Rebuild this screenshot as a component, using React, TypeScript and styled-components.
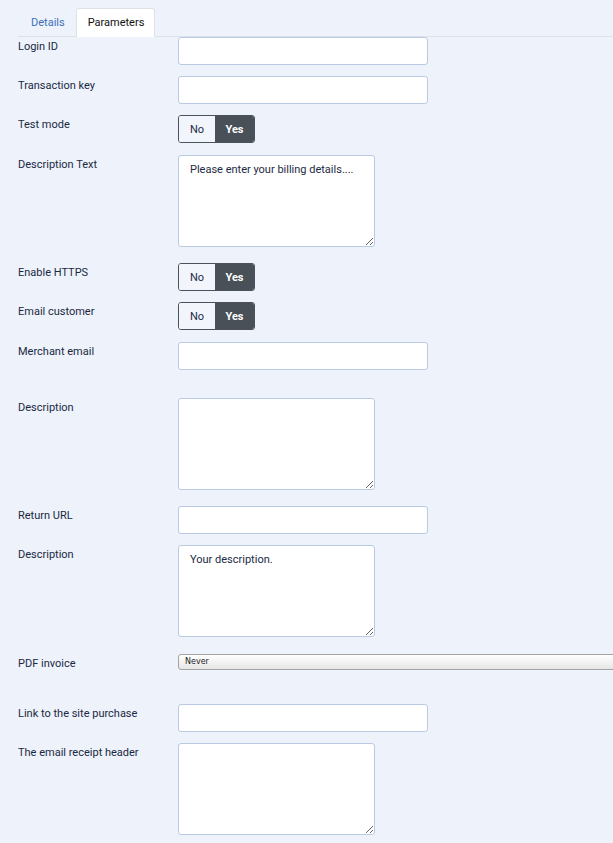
import React from "react";
import styled, { createGlobalStyle } from "styled-components";

const Global = createGlobalStyle`
  html, body { margin: 0; padding: 0; background: #eef3fb; }
  body { font-family: Roboto, "Liberation Sans", Arial, sans-serif; font-size: 11px; color: #1c2a44; }
  * { box-sizing: border-box; }
`;

const Page = styled.div`
  padding: 8px 0 0 18px;
  width: 613px;
  overflow: hidden;
`;

const TabBar = styled.div`
  display: flex;
  align-items: flex-end;
  border-bottom: 1px solid #dde2e8;
  height: 29px;
`;

const Tab = styled.div<{ $active?: boolean }>`
  height: 29px;
  padding: 0 10px 0 ${(p) => (p.$active ? 11 : 12)}px;
  display: flex;
  align-items: center;
  font-size: 11px;
  margin-bottom: -1px;
  color: ${(p) => (p.$active ? "#111" : "#3d6fb8")};
  background: ${(p) => (p.$active ? "#fff" : "transparent")};
  border: 1px solid ${(p) => (p.$active ? "#dde2e8" : "transparent")};
  border-bottom-color: ${(p) => (p.$active ? "#fff" : "transparent")};
  border-radius: 3px 3px 0 0;
`;

const Form = styled.div`
  display: flex;
  flex-direction: column;
`;

const Row = styled.div<{ $after?: number }>`
  display: flex;
  align-items: flex-start;
  margin-bottom: ${(p) => p.$after ?? 11}px;
`;

const Label = styled.label`
  width: 160px;
  flex: none;
  line-height: 20px;
  font-size: 11px;
  color: #1a2842;
`;

const Input = styled.input`
  width: 250px;
  height: 28px;
  border: 1px solid #b9cae2;
  border-radius: 3px;
  background: #fff;
  padding: 0 10px;
  font: inherit;
  outline: none;
  flex: none;
`;

const TextArea = styled.textarea`
  width: 197px;
  height: 92px;
  border: 1px solid #b9cae2;
  border-radius: 3px;
  background: #fff;
  padding: 6px 11px;
  font-family: Roboto, "Liberation Sans", Arial, sans-serif;
  font-size: 11px;
  color: #1c2a44;
  line-height: 16px;
  resize: vertical;
  outline: none;
  display: block;
  flex: none;
`;

const Toggle = styled.div`
  display: flex;
  height: 28px;
  border: 1px solid #4a525c;
  border-radius: 3px;
  overflow: hidden;
  flex: none;
`;

const ToggleBtn = styled.div<{ $on?: boolean }>`
  width: ${(p) => (p.$on ? 39 : 36)}px;
  display: flex;
  align-items: center;
  justify-content: center;
  font-size: 11px;
  font-weight: ${(p) => (p.$on ? 700 : 400)};
  color: ${(p) => (p.$on ? "#fff" : "#1c2a44")};
  background: ${(p) => (p.$on ? "#495058" : "#f2f6fc")};
`;

const Select = styled.div`
  width: 460px;
  height: 16px;
  border: 1px solid #a3a3a3;
  border-radius: 3px;
  background: linear-gradient(#ffffff, #e6e6e6);
  font-family: Tahoma, "DejaVu Sans", sans-serif;
  font-size: 8px;
  color: #222;
  line-height: 14px;
  padding-left: 6px;
  flex: none;
`;

const YesNo = () => (
  <Toggle>
    <ToggleBtn>No</ToggleBtn>
    <ToggleBtn $on>Yes</ToggleBtn>
  </Toggle>
);

export default function App() {
  return (
    <Page>
      <Global />
      <TabBar>
        <Tab>Details</Tab>
        <Tab $active>Parameters</Tab>
      </TabBar>
      <Form>
        <Row>
          <Label>Login ID</Label>
          <Input />
        </Row>
        <Row>
          <Label>Transaction key</Label>
          <Input />
        </Row>
        <Row $after={12}>
          <Label>Test mode</Label>
          <YesNo />
        </Row>
        <Row $after={16}>
          <Label>Description Text</Label>
          <TextArea defaultValue="Please enter your billing details...." />
        </Row>
        <Row>
          <Label>Enable HTTPS</Label>
          <YesNo />
        </Row>
        <Row $after={12}>
          <Label>Email customer</Label>
          <YesNo />
        </Row>
        <Row $after={28}>
          <Label>Merchant email</Label>
          <Input />
        </Row>
        <Row $after={16}>
          <Label>Description</Label>
          <TextArea />
        </Row>
        <Row>
          <Label>Return URL</Label>
          <Input />
        </Row>
        <Row $after={17}>
          <Label>Description</Label>
          <TextArea defaultValue="Your description." />
        </Row>
        <Row $after={30}>
          <Label>PDF invoice</Label>
          <Select>Never</Select>
        </Row>
        <Row>
          <Label>Link to the site purchase</Label>
          <Input />
        </Row>
        <Row>
          <Label>The email receipt header</Label>
          <TextArea />
        </Row>
      </Form>
    </Page>
  );
}
